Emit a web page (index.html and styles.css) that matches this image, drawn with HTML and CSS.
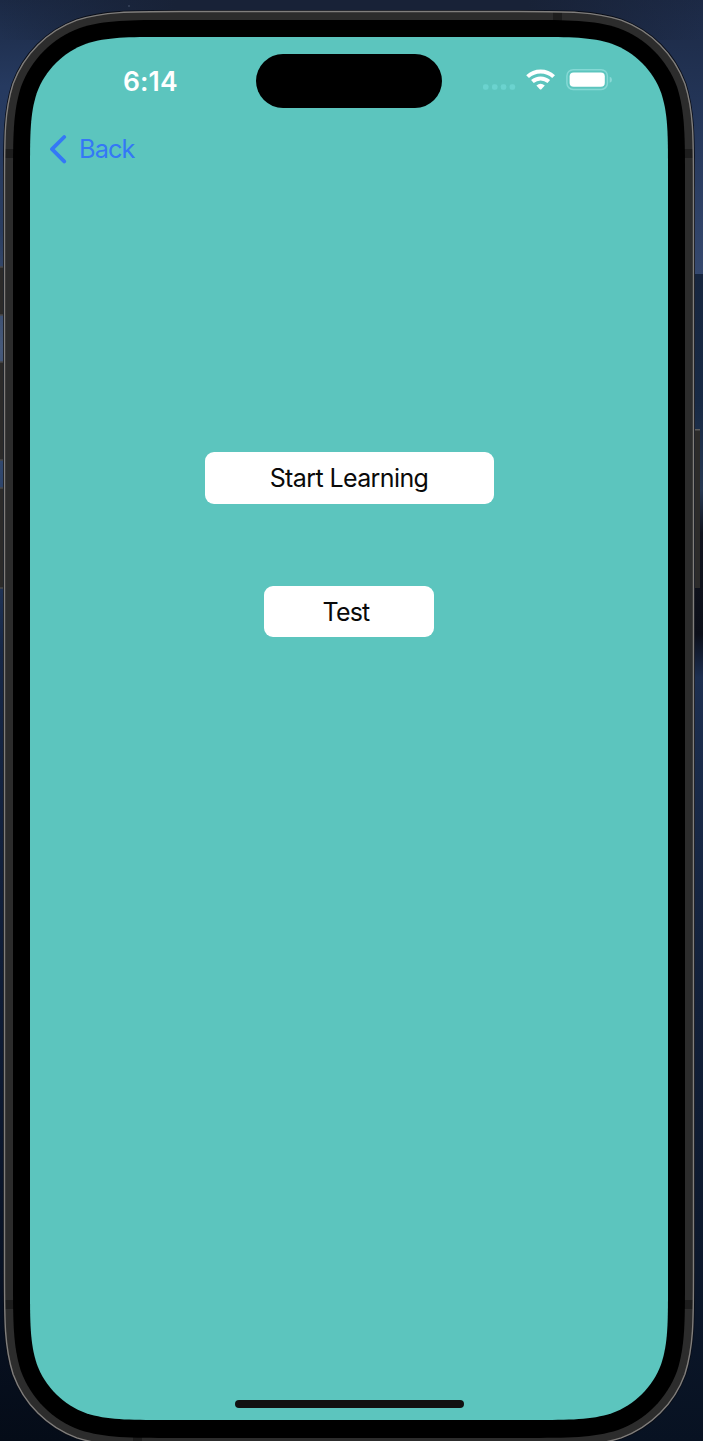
FILE: index.html
```
<!DOCTYPE html>
<html lang="en">
<head>
<meta charset="utf-8">
<title>Start Learning</title>
<link rel="stylesheet" href="styles.css">
</head>
<body>
<div class="desktop">
  <svg class="device" viewBox="0 0 703 1441" aria-hidden="true">
    <defs>
      <linearGradient id="leftSky" x2="0" y2="1">
        <stop offset="0" stop-color="#1b2944"/><stop offset=".06" stop-color="#263a60"/>
        <stop offset=".16" stop-color="#2a3d60"/><stop offset=".24" stop-color="#46597a"/>
        <stop offset=".34" stop-color="#2d446b"/><stop offset=".45" stop-color="#172848"/>
        <stop offset=".75" stop-color="#0d1a33"/><stop offset="1" stop-color="#050c18"/>
      </linearGradient>
      <linearGradient id="rightSky" x2="0" y2="1">
        <stop offset="0" stop-color="#1c2945"/><stop offset=".08" stop-color="#243659"/>
        <stop offset=".19" stop-color="#35486e"/><stop offset=".19" stop-color="#17263f"/>
        <stop offset=".28" stop-color="#182a45"/><stop offset=".34" stop-color="#263852"/>
        <stop offset=".37" stop-color="#10131d"/><stop offset=".44" stop-color="#0c0f19"/>
        <stop offset=".47" stop-color="#1d2f50"/><stop offset=".7" stop-color="#122039"/>
        <stop offset="1" stop-color="#081222"/>
      </linearGradient>
      <linearGradient id="topShade">
        <stop offset="0" stop-color="#182237" stop-opacity="0"/><stop offset=".25" stop-color="#182237"/>
        <stop offset=".75" stop-color="#182237"/><stop offset="1" stop-color="#182237" stop-opacity="0"/>
      </linearGradient>
      <path id="frame" d="M179.5 11.5H518.5C568.9 11.5 594.1 11.5 621.2 20.1C650.8 30.9 674.1 54.2 684.9 83.8C693.5 110.9 693.5 136.1 693.5 186.5V1271.5C693.5 1321.9 693.5 1347.1 684.9 1374.2C674.1 1403.8 650.8 1427.1 621.2 1437.9C594.1 1446.5 568.9 1446.5 518.5 1446.5H179.5C129.1 1446.5 103.9 1446.5 76.8 1437.9C47.2 1427.1 23.9 1403.8 13.1 1374.2C4.5 1347.1 4.5 1321.9 4.5 1271.5V186.5C4.5 136.1 4.5 110.9 13.1 83.8C23.9 54.2 47.2 30.9 76.8 20.1C103.9 11.5 129.1 11.5 179.5 11.5Z"/>
    </defs>
    <path fill="url(#leftSky)" d="M0 0H352V1441H0Z"/>
    <path fill="url(#rightSky)" d="M351 0H703V1441H351Z"/>
    <path fill="url(#topShade)" d="M0 0H703V40H0Z"/>
    <circle cx="129" cy="6" r="1" fill="#39445c"/>

    <!-- side buttons -->
    <g fill="#2c2b2a" stroke="#4a4a4a" stroke-width="1.5">
      <path d="M-2 267H5V315H-2ZM-2 362H5V460H-2ZM-2 488H5V588H-2Z"/>
    </g>
    <path fill="#2c2b2a" d="M693 429H700V588H693Z"/>
    <path fill="#5c5c5c" d="M693 429H700V430.5H693Z"/>

    <!-- metal frame -->
    <use href="#frame" fill="#2c2c2c" stroke="#0a0e17" stroke-width="3"/>
    <use href="#frame" fill="#2c2c2c"/>
    <path fill="#1d1d1d" d="M553 12h9v9h-9ZM5 149h9v9h-9ZM684 149h9v9h-9ZM5 1300h9v9h-9ZM684 1300h9v9h-9ZM133 1437h9v9h-9Z"/>
    <use href="#frame" fill="none" stroke="#807e7c" stroke-width="1.4"/>

    <!-- bezel -->
    <path fill="#000" d="M175 20H523C569.6 20 592.9 20 618.1 27.9C645.5 37.9 667.1 59.5 677.1 86.9C685 112.1 685 135.4 685 182V1276C685 1322.6 685 1345.9 677.1 1371.1C667.1 1398.5 645.5 1420.1 618.1 1430.1C592.9 1438 569.6 1438 523 1438H175C128.4 1438 105.1 1438 79.9 1430.1C52.5 1420.1 30.9 1398.5 20.9 1371.1C13 1345.9 13 1322.6 13 1276V182C13 135.4 13 112.1 20.9 86.9C30.9 59.5 52.5 37.9 79.9 27.9C105.1 20 128.4 20 175 20Z"/>
    <!-- screen -->
    <path fill="#5cc5be" d="M166 37H532C571.1 37 590.7 37 611.8 43.7C634.8 52 653 70.2 661.3 93.2C668 114.3 668 133.9 668 173V1284C668 1323.1 668 1342.7 661.3 1363.8C653 1386.8 634.8 1405 611.8 1413.3C590.7 1420 571.1 1420 532 1420H166C126.9 1420 107.3 1420 86.2 1413.3C63.2 1405 45 1386.8 36.7 1363.8C30 1342.7 30 1323.1 30 1284V173C30 133.9 30 114.3 36.7 93.2C45 70.2 63.2 52 86.2 43.7C107.3 37 126.9 37 166 37Z"/>
  </svg>

  <main class="screen">
    <header class="status">
      <time class="clock">6:14</time>
      <div class="island"></div>
      <svg class="indicators" width="132" height="26" viewBox="0 0 132 26" aria-hidden="true">
        <g fill="#6bd3cf">
          <rect x="1" y="16.3" width="5.5" height="5.5" rx="2"/><rect x="10" y="16.3" width="5.5" height="5.5" rx="2"/>
          <rect x="18.8" y="16.3" width="5.5" height="5.5" rx="2"/><rect x="27.6" y="16.3" width="5.5" height="5.5" rx="2"/>
        </g>
        <g fill="none" stroke="#fff" stroke-width="4">
          <path d="M45.6 8.6Q51 3.4 58.6 3.4T71.6 8.6"/>
          <path d="M50.4 13.6Q54 10.5 58.6 10.5T66.8 13.6"/>
        </g>
        <path fill="#fff" d="M54.4 17.4Q58.6 14 62.8 17.4L59.4 21.2Q58.6 22 57.8 21.2Z"/>
        <rect x="84.9" y="1.7" width="40.5" height="19.8" rx="6.3" fill="none" stroke="#85d9d5" stroke-width="1.5"/>
        <rect x="87.6" y="4.6" width="35.2" height="14.2" rx="4" fill="#fff"/>
        <path fill="#8ad9d6" d="M127.7 8.7Q130 9.4 130 11.7T127.7 14.8Z"/>
      </svg>
    </header>
    <nav class="nav">
      <a class="back">
        <svg width="18" height="30" viewBox="0 0 18 30" aria-hidden="true"><path d="M15.2 3L3 15.2L15.2 27.4" fill="none" stroke="#3478f6" stroke-width="3.8" stroke-linecap="round" stroke-linejoin="round"/></svg>
        <span class="back-label">Back</span>
      </a>
    </nav>
    <section class="actions">
      <button class="action action-learn">Start Learning</button>
      <button class="action action-test">Test</button>
    </section>
    <div class="home-bar"></div>
  </main>
</div>
</body>
</html>
```
FILE: styles.css
```
* { box-sizing: border-box; }
body { margin: 0; font-family: Inter, "Liberation Sans", sans-serif; }
.desktop { width: 703px; height: 1441px; display: grid; overflow: hidden; }
.device { grid-area: 1 / 1; width: 703px; height: 1441px; display: block; }
.screen {
  grid-area: 1 / 1;
  z-index: 1;
  width: 638px;
  height: 1383px;
  margin: 37px 0 0 30px;
  display: flex;
  flex-direction: column;
}
.status {
  height: 88px;
  display: grid;
  grid-template-columns: 226px 186px 226px;
  align-items: start;
}
.clock {
  padding: 27px 0 0 93px;
  color: #fff;
  font-size: 26.5px;
  line-height: 34px;
  font-weight: 600;
  letter-spacing: 0.1px;
}
.island { height: 54px; margin-top: 17px; border-radius: 27px; background: #000; }
.indicators { margin: 31px 0 0 40px; display: block; }
.nav { height: 60px; padding: 9px 0 0 19px; }
.back { display: inline-flex; align-items: center; gap: 12px; color: #3478f6; height: 30px; }
.back-label { font-size: 25.3px; line-height: 30px; letter-spacing: -0.9px; }
.actions { display: flex; flex-direction: column; align-items: center; gap: 82px; padding-top: 267px; }
.action {
  border: 0;
  padding: 0;
  background: #fff;
  color: #0a0a0a;
  border-radius: 9px;
  font: 400 25px/32px Inter, "Liberation Sans", sans-serif;
  letter-spacing: -0.6px;
}
.action-learn { width: 289px; height: 52px; }
.action-test { width: 170px; height: 50.5px; padding: 1px 6px 0 0; letter-spacing: -0.8px; }
.home-bar { width: 229px; height: 8px; border-radius: 4px; background: #111; margin: auto auto 12px; }
```
